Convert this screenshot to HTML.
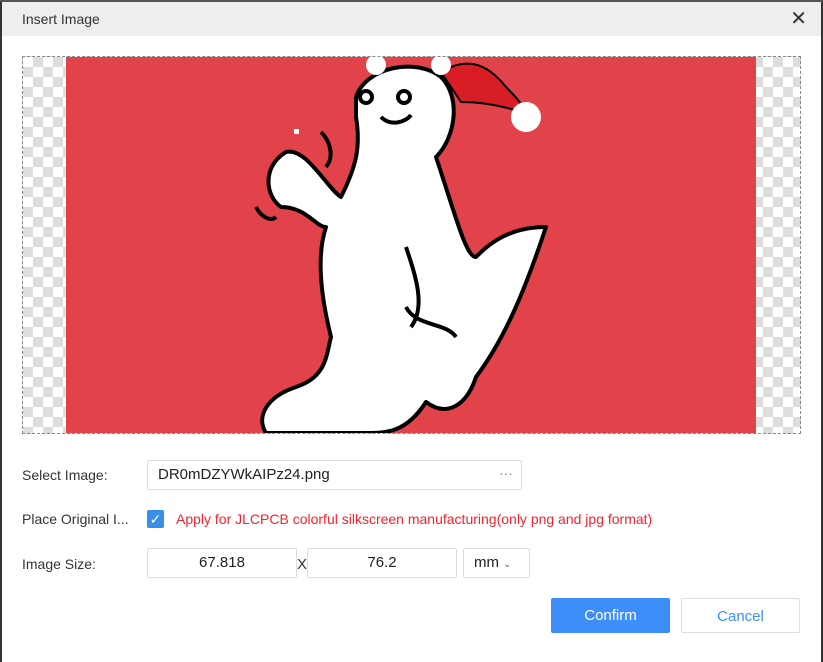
<!DOCTYPE html>
<html><head><style>
body{margin:0;width:823px;height:653px;background:#333;font-family:"Liberation Sans",sans-serif;overflow:hidden;position:relative}
.dlg{position:absolute;left:2px;top:2px;width:819px;height:660px;background:#fff}
.tb{height:34px;background:#eeeeee;position:relative}
.tb .t{position:absolute;left:20px;top:9px;font-size:14px;color:#333}
.tb .x{position:absolute;right:14px;left:auto;top:4px;font-size:20px;color:#333}
.img{position:absolute;left:20px;top:54px;width:777px;height:376px;border:1px dashed #888;
background-color:#fff;background-image:linear-gradient(45deg,#ddd 25%,transparent 25%,transparent 75%,#ddd 75%),linear-gradient(45deg,#ddd 25%,transparent 25%,transparent 75%,#ddd 75%);background-size:20px 20px;background-position:0 0,10px 10px;overflow:hidden}
.red{position:absolute;left:43px;top:0;width:690px;height:376px;background:#e2434a}
.lbl{position:absolute;left:20px;font-size:14px;color:#333}
.in{position:absolute;border:1px solid #ddd;border-radius:2px;font-size:15px;color:#222;box-sizing:border-box;background:#fff}
.btn{position:absolute;top:596px;height:35px;width:119px;box-sizing:border-box;font-size:15px;text-align:center;line-height:35px;border-radius:2px}
</style></head><body>
<div style="position:absolute;left:0;top:0;width:823px;height:2px;background:#555"></div>
<div class="dlg">
<div class="tb"><span class="t">Insert Image</span><span class="x">✕</span></div>
<div class="img"><div class="red">
<svg width="690" height="376" viewBox="0 0 690 376">
<g fill="#fff" stroke="#000" stroke-width="4" stroke-linejoin="round">
<path d="M290 40 C300 10 350 0 375 20 C395 40 390 80 370 100 C390 160 400 200 410 200 C420 190 440 170 480 170 C460 230 440 280 410 320 C400 350 380 360 360 345 C340 376 320 376 300 376 L200 376 C190 360 200 340 230 330 C260 320 260 300 265 280 C255 240 250 200 260 170 C250 170 240 150 215 150 C200 140 195 110 220 95 C240 90 260 130 275 140 C290 110 295 90 290 60Z"/>
</g>
<g fill="none" stroke="#000" stroke-width="4">
<path d="M340 250 C350 270 380 265 390 280"/><path d="M340 190 C350 220 360 250 345 270"/>
<circle cx="300" cy="40" r="6"/><circle cx="338" cy="40" r="6"/><path d="M315 60 C325 70 340 65 345 58"/>
<path d="M255 75 C265 85 268 100 260 110"/><path d="M190 150 C195 160 205 165 210 160"/>
</g>
<path d="M375 15 C400 0 420 5 440 30 C450 40 460 50 455 55 C440 50 420 45 395 45Z" fill="#d81d24" stroke="#000" stroke-width="2"/>
<circle cx="460" cy="60" r="15" fill="#fff"/><circle cx="310" cy="8" r="10" fill="#fff"/><circle cx="375" cy="8" r="10" fill="#fff"/>
<rect x="228" y="72" width="5" height="5" fill="#fff"/>
</svg></div></div>
<div class="lbl" style="top:465px">Select Image:</div>
<div class="in" style="left:145px;top:458px;width:375px;height:30px;line-height:28px;padding-left:10px">DR0mDZYWkAIPz24.png<span style="position:absolute;right:8px;color:#888;font-size:14px;top:-2px">···</span></div>
<div class="lbl" style="top:509px">Place Original I...</div>
<div style="position:absolute;left:145px;top:508px;width:17px;height:18px;background:#3a8ee6;border-radius:2px;color:#fff;font-size:14px;text-align:center;line-height:18px">✓</div>
<div style="position:absolute;left:174px;top:509px;font-size:14px;color:#f5222d">Apply for JLCPCB colorful silkscreen manufacturing(only png and jpg format)</div>
<div class="lbl" style="top:554px">Image Size:</div>
<div class="in" style="left:145px;top:546px;width:150px;height:30px;line-height:28px;text-align:center">67.818</div>
<div style="position:absolute;left:295px;top:554px;font-size:15px;color:#333">X</div>
<div class="in" style="left:305px;top:546px;width:150px;height:30px;line-height:28px;text-align:center">76.2</div>
<div class="in" style="left:461px;top:546px;width:67px;height:30px;line-height:28px;padding-left:10px">mm <span style="font-size:10px;color:#666">⌄</span></div>
<div class="btn" style="left:549px;background:#3d8ef8;color:#fff">Confirm</div>
<div class="btn" style="left:679px;border:1px solid #ddd;color:#3d8ef8">Cancel</div>
</div>
</body></html>
